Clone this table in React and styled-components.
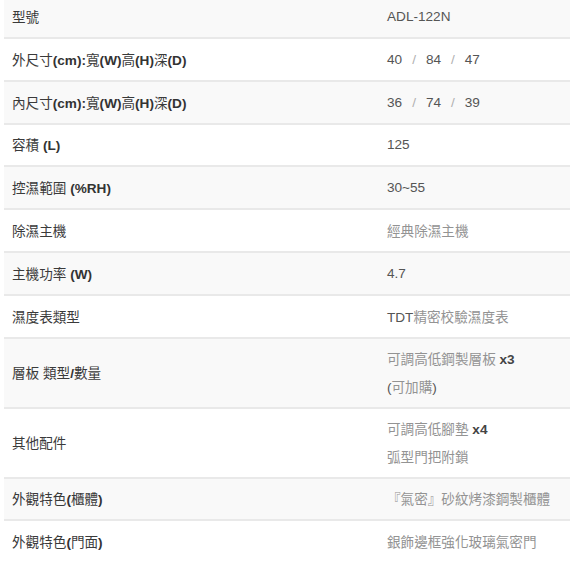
import React from "react";
import styled, { createGlobalStyle } from "styled-components";

const Global = createGlobalStyle`
  html, body { margin: 0; padding: 0; background: #fff; }
  body {
    font-family: "Liberation Sans", Arial, "Noto Sans CJK TC", sans-serif;
    font-size: 13.6px;
    overflow: hidden;
  }
`;

const Table = styled.div`
  display: flex;
  flex-direction: column;
  margin: -3.8px 0 0 4px;
`;

const Row = styled.div`
  display: grid;
  grid-template-columns: 375px 1fr;
  box-sizing: border-box;
  height: ${(p) => (p.$lines > 1 ? 70 : 42.8)}px;
  background: ${(p) => (p.$striped ? "#f9f9f9" : "#ffffff")};
  border-bottom: 2px solid #e9e9e9;
`;

const Cell = styled.div`
  display: flex;
  flex-direction: column;
  justify-content: center;
  padding: 0 8px;
  color: ${(p) => (p.$label ? "#333" : "#555")};
`;

const Line = styled.div`
  height: 27.2px;
  line-height: 27.2px;
  white-space: nowrap;
`;

const LatinBold = styled.span`
  font-weight: 700;
  color: #333;
`;

const Qty = styled.span`
  font-weight: 700;
  color: #444;
`;

const CjkLabel = styled.span`
  font-family: "Noto Sans CJK TC", sans-serif;
  color: #3a3a3a;
`;

const CjkValue = styled.span`
  font-family: "Noto Sans CJK TC", sans-serif;
  color: #939393;
`;

const Sep = styled.span`
  color: #b0b0b0;
  padding: 0 10px;
`;

const CJK_RE = /([\u3000-\u303f\u3400-\u9fff\uff00-\uffef]+)/;

function renderRuns(text, label) {
  return text.split(CJK_RE).filter(Boolean).map((part, i) => {
    const m = part.match(CJK_RE);
    const isCjk = m && m[0] === part;
    if (isCjk) {
      return label ? <CjkLabel key={i}>{part}</CjkLabel> : <CjkValue key={i}>{part}</CjkValue>;
    }
    if (label) return <LatinBold key={i}>{part}</LatinBold>;
    const q = part.match(/^(\s*)(x\d+)$/);
    if (q) {
      return (
        <React.Fragment key={i}>
          {q[1]}
          <Qty>{q[2]}</Qty>
        </React.Fragment>
      );
    }
    return <span key={i}>{part}</span>;
  });
}

function Dims({ values }) {
  return (
    <>
      {values.map((v, i) => (
        <React.Fragment key={i}>
          {i > 0 && <Sep>/</Sep>}
          <span>{v}</span>
        </React.Fragment>
      ))}
    </>
  );
}

const rows = [
  { label: "型號", value: ["ADL-122N"] },
  { label: "外尺寸(cm):寬(W)高(H)深(D)", dims: ["40", "84", "47"] },
  { label: "內尺寸(cm):寬(W)高(H)深(D)", dims: ["36", "74", "39"] },
  { label: "容積 (L)", value: ["125"] },
  { label: "控濕範圍 (%RH)", value: ["30~55"] },
  { label: "除濕主機", value: ["經典除濕主機"] },
  { label: "主機功率 (W)", value: ["4.7"] },
  { label: "濕度表類型", value: ["TDT精密校驗濕度表"] },
  { label: "層板 類型/數量", value: ["可調高低鋼製層板 x3", "(可加購)"] },
  { label: "其他配件", value: ["可調高低腳墊 x4", "弧型門把附鎖"] },
  { label: "外觀特色(櫃體)", value: ["『氣密』砂紋烤漆鋼製櫃體"] },
  { label: "外觀特色(門面)", value: ["銀飾邊框強化玻璃氣密門"] },
];

export default function App() {
  return (
    <>
      <Global />
      <Table>
        {rows.map((r, i) => {
          const lines = r.value ? r.value.length : 1;
          return (
            <Row key={i} $striped={i % 2 === 0} $lines={lines}>
              <Cell $label>
                <Line>{renderRuns(r.label, true)}</Line>
              </Cell>
              <Cell>
                {r.dims ? (
                  <Line>
                    <Dims values={r.dims} />
                  </Line>
                ) : (
                  r.value.map((v, j) => <Line key={j}>{renderRuns(v, false)}</Line>)
                )}
              </Cell>
            </Row>
          );
        })}
      </Table>
    </>
  );
}
